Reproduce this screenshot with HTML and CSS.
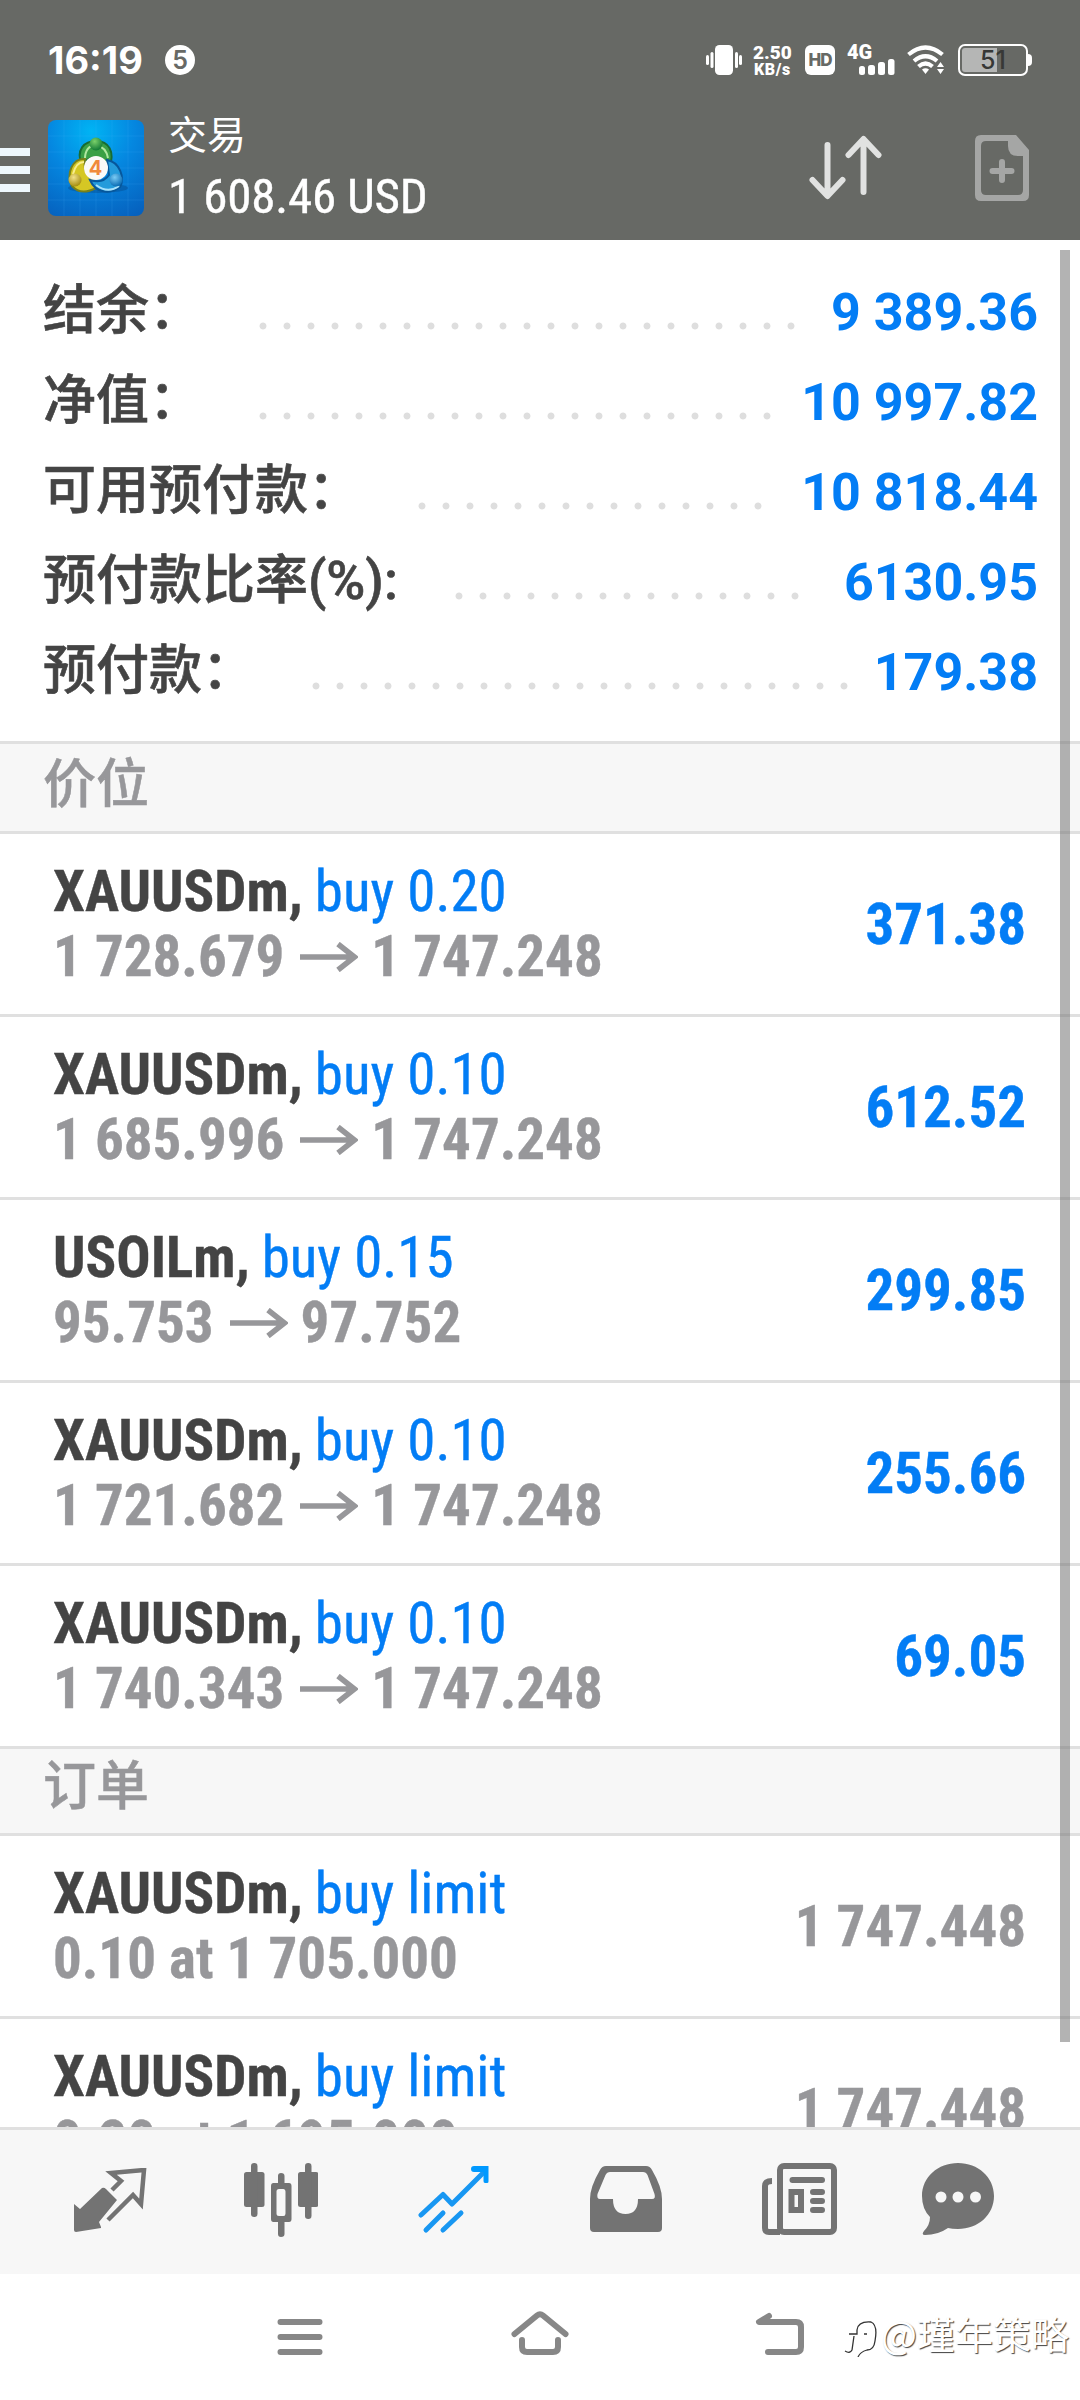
FILE: index.html
```
<!DOCTYPE html>
<html lang="zh-CN">
<head>
<meta charset="utf-8">
<title>交易</title>
<link rel="stylesheet" href="styles.css">
</head>
<body>
<svg class="defs" width="0" height="0">
  <symbol id="arrow" viewBox="0 0 58 30"><path d="M0 15H54M38 2L54.5 15L38 28" fill="none" stroke="#97979a" stroke-width="5.5"/></symbol>
</svg>
<header class="top">
  <div class="status">
    <span class="clock">16:19</span>
    <span class="count">5</span>
    <div class="status-icons">
      <svg class="vibrate" width="36" height="30" viewBox="0 0 36 30" fill="#fff"><rect x="9" width="18" height="30" rx="4.5"/><rect y="10" width="3" height="10" rx="1.5"/><rect x="4.5" y="7" width="3" height="16" rx="1.5"/><rect x="29" y="7" width="3" height="16" rx="1.5"/><rect x="33" y="10" width="3" height="10" rx="1.5"/></svg>
      <div class="speed"><b>2.50</b><b>KB/s</b></div>
      <div class="hd">HD</div>
      <div class="signal"><b>4G</b><svg width="36" height="16" viewBox="0 0 36 16" fill="#fff"><rect y="7" width="6" height="9" rx="2.5"/><rect x="9" y="6" width="7" height="10" rx="2.5"/><rect x="19" y="3" width="7" height="13" rx="2.5"/><rect x="29" width="6.5" height="16" rx="2.5"/></svg></div>
      <svg class="wifi" width="38" height="30" viewBox="0 0 38 30" fill="none" stroke="#fff" stroke-width="4.2"><path d="M1.5 9.5Q18.500 -4.500 35.500 9.500M7 16Q18.500 6.500 30 16"/><path d="M11.500 21.500Q18.500 15.500 25.500 21.500"/><path d="M15 24.500Q18.500 22 22 24.500L18.500 29Z" fill="#fff" stroke="none"/><path d="M30 22L33.500 17L37 22ZM30 24L33.500 29L37 24Z" fill="#fff" stroke="none"/></svg>
      <div class="battery"><span>51</span></div>
    </div>
  </div>
  <div class="appbar">
    <svg class="menu" width="30" height="44" viewBox="0 0 30 44" fill="#eef8fd"><path d="M0 0H30V8H0ZM0 18H30V26H0ZM0 36H30V44H0Z"/></svg>
    <svg class="logo" width="96" height="96" viewBox="0 0 96 96">
      <defs>
        <radialGradient id="bg" cx=".45" cy=".12" r="1"><stop offset="0" stop-color="#00b4f4"/><stop offset=".45" stop-color="#0587e0"/><stop offset="1" stop-color="#0660bd"/></radialGradient>
        <radialGradient id="gr" cx=".4" cy=".3" r=".7"><stop offset="0" stop-color="#7ad06a"/><stop offset="1" stop-color="#127a35"/></radialGradient>
        <radialGradient id="ye" cx=".4" cy=".3" r=".7"><stop offset="0" stop-color="#f2e28a"/><stop offset="1" stop-color="#a58d10"/></radialGradient>
        <radialGradient id="bl" cx=".4" cy=".3" r=".7"><stop offset="0" stop-color="#7accf5"/><stop offset="1" stop-color="#0a6cb4"/></radialGradient>
      </defs>
      <rect width="96" height="96" rx="8" fill="url(#bg)"/>
      <path d="M16 0V96M32 0V96M48 0V96M64 0V96M80 0V96M0 16H96M0 32H96M0 48H96M0 64H96M0 80H96" stroke="#59c2ff" stroke-opacity=".14"/>
      <ellipse cx="50" cy="68" rx="30" ry="5" fill="#053f7c" opacity=".35"/>
      <path d="M34 46C27 29 37 21 48 21C60 21 68 31 61 49Q54 37 48 38Q40 36 34 46Z" fill="#3ba045" stroke="#186c33" stroke-width="2"/>
      <path d="M37 39Q37 26 48 25Q58 27 60 38" fill="none" stroke="#b0e7a1" stroke-width="2"/>
      <path d="M37 39C24 38 18 54 24 66Q33 76 48 68L43 57Q35 53 37 39Z" fill="#d5c724" stroke="#77801c" stroke-width="2"/>
      <path d="M25 54Q28 42 36 42" fill="none" stroke="#f9ee8c" stroke-width="2"/>
      <path d="M59 40C72 42 77 58 72 67C63 74 48 74 42 60Q55 64 61 55Z" fill="#249bdb" stroke="#07579b" stroke-width="2"/>
      <path d="M48 65Q60 74 71 66" fill="none" stroke="#a9e2fb" stroke-width="2"/>
      <circle cx="48" cy="24" r="6.500" fill="url(#gr)"/><circle cx="27" cy="60" r="6.500" fill="url(#ye)"/><circle cx="68" cy="60" r="6.500" fill="url(#bl)"/>
      <circle cx="48" cy="48" r="12" fill="#fbfaf8"/>
      <text x="47.500" y="55" text-anchor="middle" class="four">4</text>
    </svg>
    <div class="heading"><div class="title">交易</div><div class="profit">1 608.46 USD</div></div>
    <svg class="sort" width="74" height="66" viewBox="0 0 74 66" fill="none" stroke="#e1e2e1" stroke-width="6" stroke-linecap="round" stroke-linejoin="round"><path d="M18.500 10V60M3.500 45L18.500 61L33.500 45M54.500 57V5M39.500 20L54.500 4L69.500 20"/></svg>
    <svg class="doc" width="54" height="66" viewBox="0 0 54 66"><path fill="#a5a6a5" fill-rule="evenodd" d="M6 0H41L54 15V60Q54 66 48 66H6Q0 66 0 60V6Q0 0 6 0ZM11 6Q6 6 6 11V55Q6 60 11 60H43Q48 60 48 55V21H43Q33 21 33 11V6Z"/><path d="M27 27V45M17.500 36H36.500" stroke="#a5a6a5" stroke-width="6" stroke-linecap="round"/></svg>
  </div>
</header>
<main class="content">
  <section class="summary">
    <div class="line"><span class="label">结余：</span><i class="dots" style="width:552px"></i><span class="value">9 389.36</span></div>
    <div class="line"><span class="label">净值：</span><i class="dots" style="width:528px"></i><span class="value">10 997.82</span></div>
    <div class="line"><span class="label">可用预付款：</span><i class="dots" style="width:360px"></i><span class="value">10 818.44</span></div>
    <div class="line"><span class="label">预付款比率<span class="latin">(%):</span></span><i class="dots" style="width:360px"></i><span class="value">6130.95</span></div>
    <div class="line"><span class="label">预付款：</span><i class="dots" style="width:552px"></i><span class="value">179.38</span></div>
  </section>
  <h2 class="section first">价位</h2>
  <article class="row"><div><p><b>XAUUSDm,</b> buy 0.20</p><p class="price">1 728.679<svg><use href="#arrow"/></svg>1 747.248</p></div><strong>371.38</strong></article>
  <article class="row"><div><p><b>XAUUSDm,</b> buy 0.10</p><p class="price">1 685.996<svg><use href="#arrow"/></svg>1 747.248</p></div><strong>612.52</strong></article>
  <article class="row"><div><p><b>USOILm,</b> buy 0.15</p><p class="price">95.753<svg><use href="#arrow"/></svg>97.752</p></div><strong>299.85</strong></article>
  <article class="row"><div><p><b>XAUUSDm,</b> buy 0.10</p><p class="price">1 721.682<svg><use href="#arrow"/></svg>1 747.248</p></div><strong>255.66</strong></article>
  <article class="row"><div><p><b>XAUUSDm,</b> buy 0.10</p><p class="price">1 740.343<svg><use href="#arrow"/></svg>1 747.248</p></div><strong>69.05</strong></article>
  <h2 class="section">订单</h2>
  <article class="row"><div><p><b>XAUUSDm,</b> buy limit</p><p class="price">0.10 at 1 705.000</p></div><strong class="muted">1 747.448</strong></article>
  <article class="row"><div><p><b>XAUUSDm,</b> buy limit</p><p class="price">0.20 at 1 695.000</p></div><strong class="muted">1 747.448</strong></article>
  <div class="scrollbar"></div>
</main>
<nav class="tabs">
  <svg class="quotes" width="74" height="76" viewBox="0 0 74 76"><path d="M0 36L6 41L28 20Q30 19 32 21L43 32L25 54L27 59V60L2 64Q0 64 0 62Z" fill="#737373"/><path d="M38 22L47 13L37 5L70 2L67 36L59 27L34 52" fill="none" stroke="#737373" stroke-width="4.500"/></svg>
  <svg class="candles" width="74" height="76" viewBox="0 0 74 76" fill="#737373"><rect y="9" width="20.500" height="35" rx="2.500"/><rect x="7" width="6.500" height="54" rx="3.200"/><path fill-rule="evenodd" d="M34 13Q34 10 37 10Q40.500 10 40.500 13V20H45Q47.500 20 47.500 23V56Q47.500 59 45 59H40.500V71Q40.500 74 37 74Q34 74 34 71V59H29.500Q27 59 27 56V23Q27 20 29.500 20H34ZM35 26Q32.500 26 32.500 28.500V50.500Q32.500 53 35 53H39.500Q41.500 53 41.500 50.500V28.500Q41.500 26 39.500 26Z"/><rect x="54" y="9" width="20.500" height="35" rx="2.500"/><rect x="61" width="6.500" height="56" rx="3.200"/></svg>
  <svg width="74" height="76" viewBox="0 0 74 76" fill="none" stroke="#1897f2" stroke-width="5"><path d="M3 52L25 31.500L34 41L67 8" stroke-linejoin="round" stroke-linecap="round"/><path d="M56 3H70.500V18.500Q70.500 20 69 20H67Q65.500 20 65.500 18V9H56Q53 9 53 6Q53 3 56 3Z" fill="#0099ff" stroke="none"/><path d="M8 67L25 50M25 67L43 50" stroke-linecap="round"/></svg>
  <svg width="74" height="76" viewBox="0 0 74 76"><path fill="#737373" fill-rule="evenodd" d="M16 3H56Q60 3 62 7Q72 24 72 36V65Q72 69 68 69H4Q0 69 0 65V36Q0 24 10 7Q12 3 16 3ZM20 9Q17 9 15.500 12L7.500 31Q6.500 36 10 36H23Q23 51 35.500 51Q48 51 48 36H62Q66 36 64.500 31L57.500 12Q56 9 53 9Z"/></svg>
  <svg width="75" height="76" viewBox="0 0 75 76" fill="none" stroke="#737373" stroke-width="6"><rect x="18" y="3" width="54" height="66" rx="4"/><path d="M10 18Q3 18 3 23V65Q3 69 7 69H18"/><path d="M30.500 17H60" stroke-linecap="round"/><path d="M51 29H60M51 38H60M51 47H60" stroke-linecap="round"/><rect x="29.500" y="29" width="9.500" height="18"/></svg>
  <svg class="chat" width="74" height="76" viewBox="0 0 74 76"><path fill="#737373" d="M36 0C56 0 72 14 72 33S56 66 36 66Q30 66 26 65Q16 72 3 72Q-1 72 2 68Q8 62 8 54Q0 46 0 33C0 14 16 0 36 0Z"/><g fill="#f7f7f7"><circle cx="19" cy="34" r="5.500"/><circle cx="36" cy="34" r="5.500"/><circle cx="53.500" cy="34" r="5.500"/></g></svg>
</nav>
<footer class="system">
  <svg width="60" height="50" viewBox="0 0 60 50"><path d="M10.500 12H49.500M10.500 27H49.500M10.500 42H49.500" stroke="#878787" stroke-width="6" stroke-linecap="round"/></svg>
  <svg width="60" height="50" viewBox="0 0 60 50" fill="none" stroke="#878787" stroke-width="6" stroke-linecap="round"><path d="M4.500 24L27 5.500Q30 3 33 5.500L55.500 24M12 30V37Q12 42 17 42H43Q48 42 48 37V30"/></svg>
  <svg width="60" height="50" viewBox="0 0 60 50" fill="none" stroke="#878787" stroke-width="6" stroke-linecap="round" stroke-linejoin="round"><path d="M19 6L9 12H46Q51 12 51 17V37Q51 42 46 42H18"/></svg>
</footer>
<div class="watermark"><svg width="38" height="46" viewBox="0 0 36 46" fill="none"><path d="M1 40Q6 43 8 39L10 25M5 23H13V19Q14 10 27 11Q34 14 31 30Q30 39 23 39Q16 41 14 46M20 23H23" stroke="#333" stroke-width="1.300"/></svg>@瑾年策略</div>
</body>
</html>
```
FILE: styles.css
```
* { box-sizing: border-box; }
body {
  margin: 0; width: 1080px; height: 2400px; position: relative; overflow: hidden;
  display: flex; flex-direction: column; background: #fff; color: #444;
  font-family: Roboto, "Noto Sans CJK SC", sans-serif;
}
p, h2 { margin: 0; }
svg { display: block; flex: none; }
.defs { position: absolute; }

.top { height: 240px; background: #676965; color: #fff; }
.status { height: 120px; display: flex; padding: 45px 52px 0 48px; }
.clock { width: 96px; font: 700 38px/30px Inter, sans-serif; white-space: nowrap; }
.count { width: 30px; height: 30px; margin-left: 21px; border-radius: 50%; background: #fff; color: #676965; font: 600 25px/31px Inter, sans-serif; text-align: center; }
.status-icons { display: flex; margin-left: auto; }
.speed { width: 39px; margin-left: 11px; display: flex; flex-direction: column; gap: 2px; font: 700 19px/15px Roboto, sans-serif; }
.speed b + b { font-size: 16px; letter-spacing: .6px; line-height: 15px; padding-left: 1px; }
.hd { width: 30px; height: 30px; margin-left: 13px; border-radius: 6px; background: #fff; color: #676965; font: 800 17px/31px Inter, sans-serif; letter-spacing: -1px; text-align: center; }
.signal { width: 48px; margin-left: 12px; font: 700 20px/15px Roboto, sans-serif; }
.signal b { display: block; height: 14px; }
.signal svg { margin-left: 12px; }
.wifi { margin-left: 12px; }
.battery { position: relative; width: 70px; height: 32px; margin: -1px 0 0 13px; border: 2.500px solid #fff; border-radius: 7px; padding: 2px; }
.battery::before { content: ""; display: block; width: 35px; height: 24px; border-radius: 3px 0 0 3px; background: #b5b6b5; }
.battery::after { content: ""; position: absolute; left: 68px; top: 8px; width: 4px; height: 12px; border-radius: 0 4px 4px 0; background: #fff; }
.battery span { position: absolute; inset: 0; font: 500 25px/29px Inter, sans-serif; color: #373836; text-align: center; }

.appbar { height: 120px; display: flex; }
.menu { margin-top: 28px; }
.logo { margin-left: 18px; }
.four { font: 700 20px Inter, sans-serif; fill: #f08a3c; }
.heading { margin-left: 24px; padding-top: 1px; }
.title { font-size: 39px; line-height: 30px; }
.profit { margin-top: 21px; font: 400 49px/50px "Roboto Condensed", Roboto, sans-serif; letter-spacing: -.15px; white-space: nowrap; -webkit-text-stroke: .4px; }
.sort { margin: 15px 0 0 auto; }
.doc { margin: 15px 51px 0 92px; }

.content { position: relative; height: 1887px; overflow: hidden; }
.summary { height: 501px; padding: 26px 42px 0 43px; }
.line { height: 90px; display: flex; align-items: flex-start; font-size: 53px; font-weight: 500; line-height: 80px; white-space: nowrap; }
.label { font-family: "Noto Sans CJK SC", sans-serif; -webkit-text-stroke: .6px; }
.latin { font-family: Roboto, sans-serif; }
.dots { height: 8px; margin: 56px 0 0 49px; background: radial-gradient(circle, #dedede 3px, transparent 3.900px) 0 0 / 24px 8px repeat-x; }
.value { margin-left: auto; color: #037df5; font-weight: 700; font-size: 52px; line-height: 93px; }
.section { height: 87px; padding-left: 43px; background: #f7f7f7; border-bottom: 3px solid #e0e0e0; color: #97979a; font: 500 53px/66px "Noto Sans CJK SC", sans-serif; -webkit-text-stroke: .5px; }
.first { height: 93px; line-height: 73px; border-top: 3px solid #e0e0e0; }
.row { height: 183px; border-bottom: 3px solid #e0e0e0; padding: 25px 54px 0 53px; display: flex; justify-content: space-between; font: 400 57px/65px "Roboto Condensed", Roboto, sans-serif; color: #037df5; white-space: nowrap; -webkit-text-stroke: .4px; }
.row b { color: #444; margin-right: -1px; }
.row strong { padding-top: 33px; }
.price { display: flex; font-weight: 700; color: #97979a; }
.price svg { width: 58px; height: 30px; margin: 18px 13px 0 16px; }
.row .muted { color: #97979a; }
.scrollbar { position: absolute; left: 1060px; top: 10px; width: 10px; height: 1792px; background: rgba(120, 120, 120, .56); }

.tabs { height: 147px; background: #f7f7f7; border-top: 3px solid #e0e0e0; display: flex; gap: 98px; padding: 33px 0 0 74px; }
.quotes { margin-top: 5px; }
.candles { margin: 0 2px 0 -2px; }
.chat { margin-left: -13px; }
.system { height: 126px; display: flex; justify-content: center; gap: 180px; padding-top: 36px; }
.watermark { position: absolute; left: 843px; top: 2311px; display: flex; color: #fff; font: 400 38px/44px "Noto Sans CJK SC", sans-serif; text-shadow: 1px 1px 1px rgba(0, 0, 0, .75); white-space: nowrap; }
```
